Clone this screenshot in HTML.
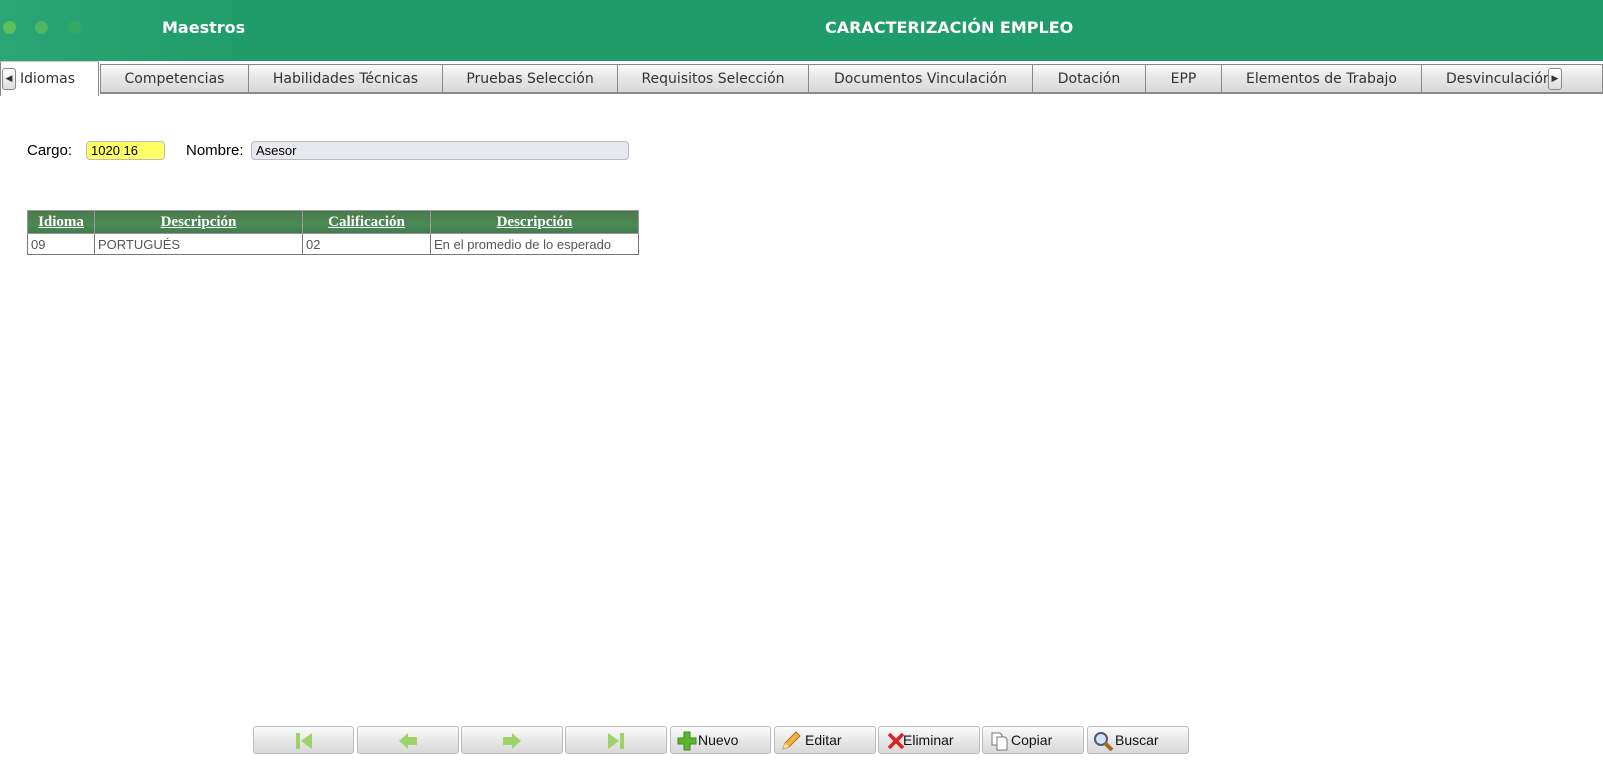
<!DOCTYPE html>
<html><head><meta charset="utf-8"><style>
body{margin:0;width:1603px;height:775px;position:relative;background:#fff;font-family:"DejaVu Sans","Liberation Sans",sans-serif;overflow:hidden}
.hdr{position:absolute;left:0;top:0;width:1603px;height:61px;background:linear-gradient(90deg,#2aa676 0,#1f9c6a 250px,#1e9b69 100%)}
.dot{position:absolute;top:21px;width:13px;height:13px;border-radius:50%}
.hdr .t{position:absolute;color:#fff;font-weight:bold;font-size:16px;top:18px}
.tabs{position:absolute;top:61px;left:0;width:1603px;height:35px;background:#fff}
.tab{position:absolute;top:3px;height:30px;border:1px solid #888;border-bottom:2px solid #888;background:linear-gradient(#fafafa,#e6e6e6 50%,#d8d8d8);font-size:14px;color:#333;text-align:center;line-height:29px;box-sizing:border-box;white-space:nowrap;overflow:hidden}
.act{background:#fff;border-bottom:none;top:0;height:35px;line-height:34px;text-align:left;padding-left:19px}
.arr{position:absolute;width:14px;height:22px;border:1px solid #888;border-radius:3px;background:linear-gradient(#fff,#ddd);box-sizing:border-box;font-size:9px;line-height:20px;text-align:center;color:#333}
.lbl{position:absolute;font-family:"Liberation Sans",sans-serif;font-size:15px;color:#000}
.inp{position:absolute;height:19px;border:1px solid #bbb;border-radius:4px;box-sizing:border-box;font-family:"Liberation Sans",sans-serif;font-size:13px;line-height:18px;padding-left:4px}
table{position:absolute;left:27px;top:210px;border-collapse:collapse;font-size:12px}
th{background:linear-gradient(#4c7a4c,#4a8a55 60%,#3f7c4a);color:#fff;font-family:"Liberation Serif",serif;font-size:15px;font-weight:bold;text-decoration:underline;height:22px;padding:0;border:1px solid #999}
td{border:1px solid #777;color:#555;height:20px;padding:0 3px;font-family:"Liberation Sans",sans-serif;font-size:13px}
.btn{position:absolute;top:726px;height:28px;border:1px solid #bbb;border-radius:3px;background:linear-gradient(#fcfcfc,#e4e4e4 60%,#d9d9d9);box-sizing:border-box;font-family:"Liberation Sans",sans-serif;font-size:14px;color:#111;line-height:27px}
.btn svg{position:absolute;top:4px}
</style></head><body>
<div class="hdr">
<div class="dot" style="left:3px;background:#5cbf5a"></div>
<div class="dot" style="left:35px;background:#4db762"></div>
<div class="dot" style="left:68px;background:#35a866"></div>
<div class="t" style="left:162px">Maestros</div>
<div class="t" style="left:825px">CARACTERIZACIÓN EMPLEO</div>
</div>
<div class="tabs">
<div class="tab" style="left:100px;width:149px">Competencias</div>
<div class="tab" style="left:248px;width:195px">Habilidades Técnicas</div>
<div class="tab" style="left:442px;width:176px">Pruebas Selección</div>
<div class="tab" style="left:617px;width:192px">Requisitos Selección</div>
<div class="tab" style="left:808px;width:225px">Documentos Vinculación</div>
<div class="tab" style="left:1032px;width:114px">Dotación</div>
<div class="tab" style="left:1145px;width:77px">EPP</div>
<div class="tab" style="left:1221px;width:201px">Elementos de Trabajo</div>
<div class="tab" style="left:1421px;width:182px;text-align:left;padding-left:24px">Desvinculación</div>
<div class="tab act" style="left:0;width:99px;border-top:1px solid #ccc">Idiomas</div>
<div class="arr" style="left:2px;top:7px">◀</div>
<div class="arr" style="left:1548px;top:7px">▶</div>
</div>
<div class="lbl" style="left:27px;top:142px">Cargo:</div>
<div class="inp" style="left:86px;top:141px;width:79px;background:#ffff66">1020 16</div>
<div class="lbl" style="left:186px;top:142px">Nombre:</div>
<div class="inp" style="left:251px;top:141px;width:378px;background:#e8e8f0">Asesor</div>
<table>
<tr><th style="width:66px">Idioma</th><th style="width:207px">Descripción</th><th style="width:127px">Calificación</th><th style="width:207px">Descripción</th></tr>
<tr><td>09</td><td>PORTUGUÉS</td><td>02</td><td>En el promedio de lo esperado</td></tr>
</table>
<div class="btn" style="left:253px;width:101px"><svg style="left:40px" width="20" height="20"><rect x="2" y="2" width="4" height="16" fill="#9ed36a"/><path d="M18 2 L7 10 L18 18Z" fill="#9ed36a"/></svg></div>
<div class="btn" style="left:357px;width:102px"><svg style="left:39px" width="22" height="20"><path d="M2 10 L11 2 V6 H20 V14 H11 V18Z" fill="#9ed36a"/></svg></div>
<div class="btn" style="left:461px;width:102px"><svg style="left:39px" width="22" height="20"><path d="M20 10 L11 2 V6 H2 V14 H11 V18Z" fill="#9ed36a"/></svg></div>
<div class="btn" style="left:565px;width:102px"><svg style="left:40px" width="20" height="20"><rect x="14" y="2" width="4" height="16" fill="#9ed36a"/><path d="M2 2 L13 10 L2 18Z" fill="#9ed36a"/></svg></div>
<div class="btn" style="left:670px;width:101px;padding-left:27px"><svg style="left:5px" width="22" height="20"><path d="M8 1H14V7H20V13H14V19H8V13H2V7H8Z" fill="#5db52f" stroke="#3d8a1d"/></svg>Nuevo</div>
<div class="btn" style="left:774px;width:102px;padding-left:30px"><svg style="left:5px" width="22" height="20"><path d="M3 18 L5 12 L16 1 L20 5 L9 16Z" fill="#f3b23a" stroke="#b07020"/><path d="M3 18L5 12L9 16Z" fill="#f5deb0"/></svg>Editar</div>
<div class="btn" style="left:878px;width:102px;padding-left:24px"><svg style="left:7px" width="20" height="20"><path d="M3 3L17 17M17 3L3 17" stroke="#e02020" stroke-width="3.5"/></svg>Eliminar</div>
<div class="btn" style="left:982px;width:102px;padding-left:28px"><svg style="left:7px" width="20" height="20"><path d="M2 2H10L12 4V14H2Z" fill="#fff" stroke="#777"/><path d="M7 6H15L17 8V19H7Z" fill="#fff" stroke="#777"/></svg>Copiar</div>
<div class="btn" style="left:1087px;width:102px;padding-left:27px"><svg style="left:5px" width="22" height="20"><circle cx="8" cy="8" r="6" fill="#cde6f5" stroke="#557" stroke-width="2"/><path d="M12 12L19 19" stroke="#a06a20" stroke-width="4"/></svg>Buscar</div>
</body></html>
